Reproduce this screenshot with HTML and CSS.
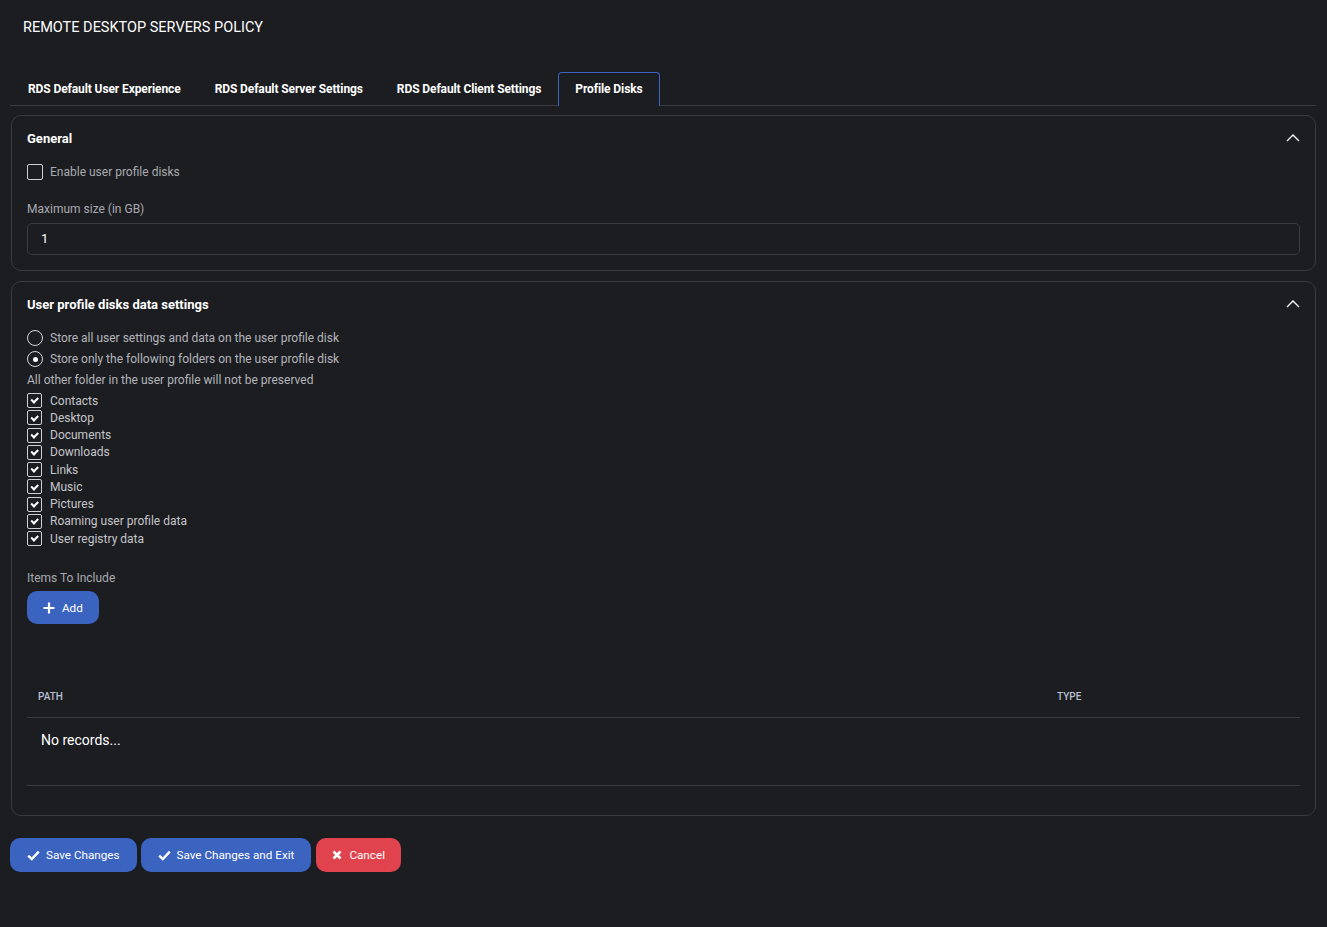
FILE: index.html
```html
<!DOCTYPE html>
<html lang="en">
<head>
  <meta charset="UTF-8">
  <meta name="viewport" content="width=device-width, initial-scale=1.0">
  <title>Remote Desktop Servers Policy</title>
  <link rel="stylesheet" href="styles.css">
</head>
<body>

  <!-- Page Title -->
  <h1 class="page-title">REMOTE DESKTOP SERVERS POLICY</h1>

  <!-- Tabs -->
  <div class="tabs">
    <div class="tab">RDS Default User Experience</div>
    <div class="tab">RDS Default Server Settings</div>
    <div class="tab">RDS Default Client Settings</div>
    <div class="tab active">Profile Disks</div>
  </div>

  <!-- General -->
  <div class="card first-card">
    <div class="card-header">
      <span>General</span>
      <svg class="chevron" width="14" height="8" viewBox="0 0 14 8"><path d="M1 7 L7 1 L13 7" fill="none" stroke="#fff" stroke-width="1.4"/></svg>
    </div>
    <label class="check-row">
      <span class="box"></span>
      <span class="muted">Enable user profile disks</span>
    </label>
    <div class="field-label">Maximum size (in GB)</div>
    <div class="text-input">1</div>
  </div>

  <!-- User profile disks data settings -->
  <div class="card">
    <div class="card-header">
      <span>User profile disks data settings</span>
      <svg class="chevron" width="14" height="8" viewBox="0 0 14 8"><path d="M1 7 L7 1 L13 7" fill="none" stroke="#fff" stroke-width="1.4"/></svg>
    </div>

    <div class="radio-group">
      <label class="radio-row"><span class="radio"></span><span>Store all user settings and data on the user profile disk</span></label>
      <label class="radio-row"><span class="radio on"></span><span>Store only the following folders on the user profile disk</span></label>
    </div>
    <div class="note">All other folder in the user profile will not be preserved</div>

    <div class="folders">
      <label class="folder"><span class="box checked"></span>Contacts</label>
      <label class="folder"><span class="box checked"></span>Desktop</label>
      <label class="folder"><span class="box checked"></span>Documents</label>
      <label class="folder"><span class="box checked"></span>Downloads</label>
      <label class="folder"><span class="box checked"></span>Links</label>
      <label class="folder"><span class="box checked"></span>Music</label>
      <label class="folder"><span class="box checked"></span>Pictures</label>
      <label class="folder"><span class="box checked"></span>Roaming user profile data</label>
      <label class="folder"><span class="box checked"></span>User registry data</label>
    </div>

    <div class="field-label include">Items To Include</div>
    <button class="btn btn-blue add">
      <svg width="12" height="12" viewBox="0 0 12 12"><path d="M6 0.5 V11.5 M0.5 6 H11.5" stroke="#fff" stroke-width="2.2"/></svg>
      Add
    </button>

    <table class="grid">
      <thead>
        <tr>
          <th class="col-path">PATH</th>
          <th>TYPE</th>
        </tr>
      </thead>
      <tbody>
        <tr><td colspan="2" class="empty">No records...</td></tr>
      </tbody>
    </table>
  </div>

  <!-- Actions -->
  <div class="actions">
    <button class="btn btn-blue">
      <svg width="13" height="11" viewBox="0 0 13 11"><path d="M1.2 5.6 L4.8 9 L11.8 1.6" fill="none" stroke="#fff" stroke-width="2.4"/></svg>
      Save Changes
    </button>
    <button class="btn btn-blue">
      <svg width="13" height="11" viewBox="0 0 13 11"><path d="M1.2 5.6 L4.8 9 L11.8 1.6" fill="none" stroke="#fff" stroke-width="2.4"/></svg>
      Save Changes and Exit
    </button>
    <button class="btn btn-red cancel">
      <svg width="10" height="10" viewBox="0 0 10 10"><path d="M1.5 1.5 L8.5 8.5 M8.5 1.5 L1.5 8.5" stroke="#fff" stroke-width="2.6"/></svg>
      Cancel
    </button>
  </div>

</body>
</html>
```

FILE: styles.css
```css
body {
  margin: 0;
  padding: 0 11px 0 10px;
  font-family: Roboto, "Liberation Sans", sans-serif;
  background: #1c1d21;
  color: #e8e8ea;
  font-size: 12px;
}

.page-title {
  margin: 0;
  padding: 19px 0 0 13px;
  height: 53px;
  font-size: 14.5px;
  font-weight: 400;
  color: #fff;
  line-height: 18px;
}

/* Tabs */
.tabs {
  display: flex;
  border-bottom: 1px solid #3a3b40;
  height: 33px;
  padding-left: 1px;
}

.tab {
  padding: 0 16px;
  line-height: 32px;
  font-size: 12px;
  letter-spacing: -0.1px;
  font-weight: 700;
  color: #fff;
  border: 1px solid transparent;
  border-bottom: none;
  border-radius: 4px 4px 0 0;
}

.tab.active {
  border-color: #3d64c2;
  margin-bottom: -1px;
  background: #1c1d21;
  height: 33px;
}

/* Cards */
.card {
  border: 1px solid #3a3b40;
  border-radius: 10px;
  margin: 10px 0 10px 1px;
  padding: 0 15px 15px 15px;
}

.first-card {
  margin-top: 9px;
}

.card-header {
  display: flex;
  justify-content: space-between;
  align-items: center;
  height: 44px;
  font-size: 13px;
  font-weight: 700;
  color: #fff;
}

.check-row {
  display: flex;
  align-items: center;
  gap: 7px;
  height: 18px;
  margin-top: 3px;
}

.box {
  width: 14px;
  height: 14px;
  border: 1px solid #d0d0d4;
  border-radius: 2px;
  display: inline-flex;
  align-items: center;
  justify-content: center;
  flex: none;
}

.box.checked::after {
  content: "";
  width: 5px;
  height: 2.5px;
  border-left: 2px solid #fff;
  border-bottom: 2px solid #fff;
  transform: translateY(-1px) rotate(-45deg);
}

.muted {
  color: #a9aab0;
}

.field-label {
  color: #a9aab0;
  margin-top: 20px;
  line-height: 16px;
}

.text-input {
  margin-top: 6px;
  border: 1px solid #3a3b40;
  border-radius: 5px;
  height: 30px;
  line-height: 30px;
  padding-left: 13px;
  color: #fff;
  font-size: 13px;
}

/* Radios */
.radio-group {
  display: flex;
  flex-direction: column;
  gap: 5px;
  margin-top: 4px;
}

.radio-row {
  display: flex;
  align-items: center;
  gap: 7px;
  height: 16px;
  color: #b4b5bb;
}

.radio {
  width: 14px;
  height: 14px;
  border: 1px solid #d8d8dc;
  border-radius: 50%;
  display: inline-flex;
  align-items: center;
  justify-content: center;
}

.radio.on::after {
  content: "";
  width: 5px;
  height: 5px;
  border-radius: 50%;
  background: #fff;
}

.note {
  color: #b4b5bb;
  margin-top: 5px;
  line-height: 16px;
}

/* Folder list */
.folders {
  display: flex;
  flex-direction: column;
  margin-top: 4px;
}

.folder {
  display: flex;
  align-items: center;
  gap: 8px;
  height: 17.25px;
  color: #c4c5ca;
}

.folder .box {
  width: 13px;
  height: 13px;
}

.field-label.include {
  margin-top: 23px;
}

/* Buttons */
.btn {
  display: flex;
  align-items: center;
  gap: 6px;
  height: 34px;
  padding: 0 17px;
  border: none;
  border-radius: 10px;
  font-family: Roboto, "Liberation Sans", sans-serif;
  font-size: 11.7px;
  color: #fff;
  cursor: pointer;
}

.btn-blue {
  background: #3b63c0;
}

.btn-red {
  background: #e0434d;
}

.add {
  margin-top: 5px;
  padding: 0 16px 0 16px;
  gap: 7px;
  height: 33px;
}

/* Table */
.grid {
  width: 100%;
  margin-top: 54px;
  margin-bottom: 14px;
  border-collapse: collapse;
}

.grid th {
  text-align: left;
  font-size: 10px;
  font-weight: 500;
  color: #b9c0d4;
  padding: 13px 11px 14px;
  line-height: 12px;
  border-bottom: 1px solid #3a3b40;
}

.grid th.col-path {
  width: 997px;
}

.grid td.empty {
  padding: 14px 14px 36px;
  font-size: 14px;
  color: #fff;
  border-bottom: 1px solid #3a3b40;
  line-height: 17px;
}

/* Actions */
.actions {
  display: flex;
  gap: 4px;
  margin-top: 22px;
}

.actions .cancel {
  margin-left: 1px;
  padding: 0 16px 0 16px;
  gap: 7px;
}
```
